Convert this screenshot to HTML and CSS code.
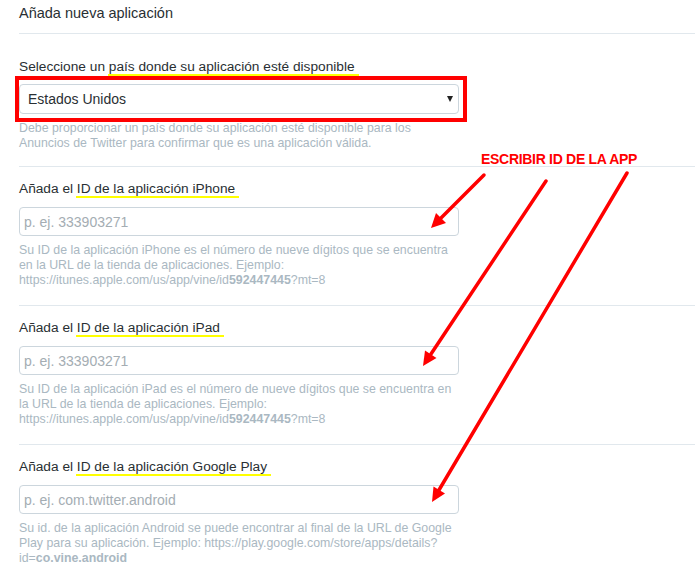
FILE: index.html
```html
<!DOCTYPE html>
<html lang="es">
<head>
  <meta charset="UTF-8">
  <meta name="viewport" content="width=device-width, initial-scale=1.0">
  <title>Añada nueva aplicación</title>
  <link rel="stylesheet" href="styles.css">
</head>
<body>
  <div class="app-form">
    <h2 class="form-title">Añada nueva aplicación</h2>

    <div class="form-section first">
      <label class="field-label" for="country">Seleccione un <span class="mark">país donde su aplicación esté disponible</span></label>
      <div class="select-wrap">
        <select class="field-select" id="country">
          <option>Estados Unidos</option>
          <option>España</option>
          <option>México</option>
        </select>
      </div>
      <p class="help">Debe proporcionar un país donde su aplicación esté disponible para los<br>Anuncios de Twitter para confirmar que es una aplicación válida.</p>
    </div>

    <div class="form-section">
      <label class="field-label" for="iphone-id">Añada el <span class="mark">ID de la aplicación iPhone</span></label>
      <input class="field-input" type="text" id="iphone-id" placeholder="p. ej. 333903271">
      <p class="help">Su ID de la aplicación iPhone es el número de nueve dígitos que se encuentra<br>en la URL de la tienda de aplicaciones. Ejemplo:<br>https://itunes.apple.com/us/app/vine/id<b>592447445</b>?mt=8</p>
    </div>

    <div class="form-section">
      <label class="field-label" for="ipad-id">Añada el <span class="mark">ID de la aplicación iPad</span></label>
      <input class="field-input" type="text" id="ipad-id" placeholder="p. ej. 333903271">
      <p class="help">Su ID de la aplicación iPad es el número de nueve dígitos que se encuentra en<br>la URL de la tienda de aplicaciones. Ejemplo:<br>https://itunes.apple.com/us/app/vine/id<b>592447445</b>?mt=8</p>
    </div>

    <div class="form-section">
      <label class="field-label" for="play-id">Añada el <span class="mark">ID de la aplicación Google Play</span></label>
      <input class="field-input" type="text" id="play-id" placeholder="p. ej. com.twitter.android">
      <p class="help">Su id. de la aplicación Android se puede encontrar al final de la URL de Google<br>Play para su aplicación. Ejemplo: https://play.google.com/store/apps/details?<br>id=<b>co.vine.android</b></p>
    </div>
  </div>

  <!-- anotaciones -->
  <div class="note">ESCRIBIR ID DE LA APP</div>
  <svg class="arrows" width="695" height="568" viewBox="0 0 695 568">
    <g stroke="#ff0000" stroke-width="3.5" stroke-linecap="round">
      <line x1="484" y1="175" x2="441" y2="218"/>
      <line x1="546" y1="181" x2="431" y2="354"/>
      <line x1="627" y1="173" x2="439" y2="490"/>
    </g>
    <g fill="#ff0000">
      <polygon points="431,228 446,223 436,213"/>
      <polygon points="423,366 436.5,358 425,350.5"/>
      <polygon points="432,502 445,493.5 433.5,486.5"/>
    </g>
  </svg>
</body>
</html>
```

FILE: styles.css
```css
body {
  margin: 0;
  padding: 0 0 0 19px;
  font-family: "Liberation Sans", Arial, sans-serif;
  color: #292f33;
  background-color: #fff;
}
.form-title {
  margin: 0;
  padding: 3px 0 10px;
  font-size: 14.5px;
  font-weight: normal;
  line-height: 20px;
  border-bottom: 1px solid #e1e8ed;
}
.form-section {
  padding: 13px 0 17px;
  border-bottom: 1px solid #e1e8ed;
}
.form-section.first {
  padding: 24px 0 15px;
}
.field-label {
  display: block;
  font-size: 13.7px;
  line-height: 18px;
  margin-bottom: 9px;
}
.first .field-label {
  margin-bottom: 8px;
}
/* subrayado amarillo */
.mark {
  position: relative;
}
.mark::after {
  content: "";
  position: absolute;
  left: -1px;
  right: -4px;
  bottom: -2px;
  height: 2px;
  background-color: #ffff00;
}
.field-input,
.field-select {
  display: block;
  box-sizing: border-box;
  width: 440px;
  height: 29px;
  margin: 0;
  padding: 0 4px;
  border: 1px solid #ccd6dd;
  border-radius: 4px;
  background-color: #fff;
  font-family: "Liberation Sans", Arial, sans-serif;
  font-size: 14px;
  color: #292f33;
}
.field-input::placeholder {
  color: #a4adb3;
}
.field-select {
  height: 30px;
  padding: 0 8px;
  -webkit-appearance: none;
  appearance: none;
}
.select-wrap {
  position: relative;
  width: 440px;
}
.select-wrap::after {
  content: "";
  position: absolute;
  right: 6px;
  top: 12px;
  border-left: 3px solid transparent;
  border-right: 3px solid transparent;
  border-top: 6px solid #222;
  pointer-events: none;
}
/* recuadro rojo */
.select-wrap::before {
  content: "";
  position: absolute;
  left: -4px;
  top: -8px;
  width: 452px;
  height: 46px;
  box-sizing: border-box;
  border: 4px solid #ff0000;
  pointer-events: none;
}
.help {
  margin: 7px 0 0;
  font-size: 12.35px;
  line-height: 15px;
  color: #aab8c2;
  white-space: nowrap;
}
.help b {
  font-weight: bold;
}
.note {
  position: absolute;
  left: 481px;
  top: 151px;
  font-size: 14px;
  font-weight: bold;
  line-height: 16px;
  letter-spacing: -0.3px;
  color: #ff0000;
}
.arrows {
  position: absolute;
  left: 0;
  top: 0;
  pointer-events: none;
}
```
